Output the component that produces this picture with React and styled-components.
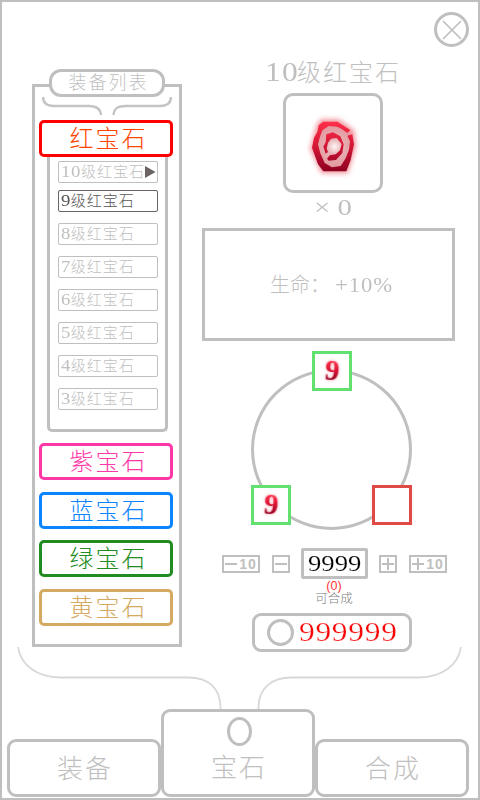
import React from "react";
import styled, { createGlobalStyle } from "styled-components";

const LINE = "#bfbfbf";
const RED = "#fa0505";

const Global = createGlobalStyle`
  * { box-sizing: border-box; }
  body { margin: 0; background: #fff; }
  button { padding: 0; margin: 0; background: #fff; font: inherit; color: inherit; }
  svg { display: block; flex: none; }
`;

const Frame = styled.div`
  width: 480px;
  height: 800px;
  border: 2px solid ${LINE};
  background: #fff;
  color: ${LINE};
  font-family: "Liberation Serif", "Noto Sans CJK SC", serif;
  font-weight: 300;
  display: flex;
  flex-direction: column;
  overflow: hidden;
`;

const Columns = styled.main`
  display: flex;
  height: 645px;
  padding-left: 30px;
  gap: 20px;
`;

const Label = styled.span`
  display: block;
  white-space: pre;
  font-size: ${(p) => p.$size}px;
  line-height: ${(p) => p.$line || p.$size}px;
  letter-spacing: ${(p) => p.$gap || 0}px;
  color: ${(p) => p.$color || "inherit"};
`;

const Digits = styled.span`
  display: inline-block;
  font-size: ${(p) => p.$size}px;
  letter-spacing: ${(p) => p.$gap || 0}px;
  transform: scaleX(${(p) => p.$stretch || 1.17});
  transform-origin: left;
  margin-right: ${(p) => p.$pad || 0}px;
  -webkit-text-stroke: ${(p) => p.$thin || 0}px #fff;
`;

const Sidebar = styled.aside`
  width: 150px;
  height: 563px;
  margin-top: 82px;
  border: 3px solid ${LINE};
  display: flex;
  flex-direction: column;
  align-items: center;
`;

const SidebarTitle = styled.h2`
  width: 116px;
  height: 28px;
  margin: -18px 0 0;
  flex: none;
  border: 3px solid ${LINE};
  border-radius: 12px;
  background: #fff;
  font-weight: 300;
  display: flex;
  justify-content: center;
  align-items: center;
  padding-left: 3px;
`;

const CategoryButton = styled.button`
  width: 134px;
  height: 37px;
  flex: none;
  border: 3px solid ${(p) => p.$color};
  border-radius: 5px;
  color: ${(p) => p.$text || p.$color};
  margin-left: -2px;
  display: flex;
  justify-content: center;
  align-items: center;
  padding: 1px 0 0 5px;
`;

const LevelList = styled.div`
  width: 121px;
  height: 275px;
  flex: none;
  border: 3px solid ${LINE};
  border-top: 0;
  border-radius: 0 0 5px 5px;
  padding: 4px 0 0 8px;
  display: flex;
  flex-direction: column;
  gap: 11px;
`;

const LevelButton = styled.button`
  width: 100px;
  height: 22px;
  flex: none;
  border: 1px solid ${(p) => (p.$active ? "#6b6262" : LINE)};
  border-radius: 2px;
  color: ${(p) => (p.$active ? "#555" : LINE)};
  padding-left: 2px;
  display: flex;
  align-items: center;
  &:first-child { margin-bottom: -4px; }
`;

const Categories = styled.div`
  margin-top: 11px;
  display: flex;
  flex-direction: column;
  gap: 11.7px;
`;

const Detail = styled.section`
  width: 274px;
  display: flex;
  flex-direction: column;
`;

const CloseButton = styled.button`
  width: 35px;
  height: 35px;
  margin: 10px 7px 0 232px;
  flex: none;
  border: 3px solid ${LINE};
  border-radius: 50%;
  display: grid;
  place-items: center;
`;

const GemHeader = styled.div`
  width: 262px;
  height: 181px;
  flex: none;
  display: flex;
  flex-direction: column;
  align-items: center;
  padding-top: 11px;
`;

const GemBox = styled.div`
  width: 100px;
  height: 100px;
  margin: 6px 0 5px;
  flex: none;
  border: 3px solid ${LINE};
  border-radius: 10px;
  display: flex;
  justify-content: center;
  padding-top: 20px;
`;

const StatBox = styled.div`
  width: 253px;
  height: 113px;
  flex: none;
  border: 3px solid ${LINE};
  display: flex;
  align-items: center;
  padding-left: 65px;
`;

const Ring = styled.div`
  position: relative;
  width: 161px;
  height: 161px;
  margin: 28px 0 0 49px;
  flex: none;
  border: 3px solid ${LINE};
  border-radius: 50%;
`;

const Slot = styled.div`
  position: absolute;
  left: ${(p) => p.$x}px;
  top: ${(p) => p.$y}px;
  width: 40px;
  height: 40px;
  border: 3px solid ${(p) => (p.$empty ? "#e14848" : "#62e070")};
  background: #fff;
  display: grid;
  place-items: center;
`;

const GemNine = styled.span`
  font: bold 29px/29px "Liberation Serif", serif;
  transform: translateY(-1px) rotate(5deg);
  color: transparent;
  background: linear-gradient(#ff3048 20%, #d81335 50%, #8e0020 85%);
  background-clip: text;
  filter: drop-shadow(0 0 1.5px rgba(235, 60, 80, 0.6));
`;

const Stepper = styled.div`
  display: flex;
  align-items: center;
  margin: 18px 0 0 20px;
  height: 31px;
  flex: none;
`;

const StepButton = styled.button`
  width: ${(p) => (p.$wide ? 38 : 18)}px;
  height: 18px;
  margin-right: ${(p) => p.$after || 0}px;
  border: 2px solid ${LINE};
  display: flex;
  align-items: center;
  justify-content: center;
  gap: 2px;
  font: bold 14px/14px "Liberation Sans", sans-serif;
  letter-spacing: 0.9px;
`;

const Amount = styled.div`
  width: 67px;
  height: 31px;
  margin-right: 11px;
  border: 3px solid ${LINE};
  border-radius: 2px;
  color: #000;
  display: flex;
  align-items: center;
  padding-left: 4px;
`;

const Possible = styled.div`
  width: 264px;
  height: 34px;
  padding-top: 1px;
  display: flex;
  flex-direction: column;
  align-items: center;
  gap: 1px;
  flex: none;
`;

const Count = styled.span`
  font: 12.5px/12px "Liberation Sans", sans-serif;
  color: #f33;
`;

const Cost = styled.button`
  width: 160px;
  height: 39px;
  margin-left: 50px;
  border: 3px solid ${LINE};
  border-radius: 9px;
  display: flex;
  align-items: center;
  padding-left: 12px;
  gap: 5px;
  flex: none;
`;

const Coin = styled.span`
  width: ${(p) => p.$w}px;
  height: ${(p) => p.$h}px;
  border: 3px solid ${LINE};
  border-radius: 50%;
  flex: none;
`;

const Flourish = styled.div`
  height: 62px;
  margin-left: 14px;
  flex: none;
`;

const Tabs = styled.nav`
  display: flex;
  align-items: flex-end;
  height: 88px;
  padding-left: 5px;
  flex: none;
`;

const Tab = styled.button`
  width: 154px;
  height: ${(p) => (p.$active ? 88 : 58)}px;
  border: 3px solid ${LINE};
  border-radius: 9px;
  display: flex;
  flex-direction: column;
  align-items: center;
  justify-content: flex-end;
  padding-bottom: ${(p) => (p.$active ? 12 : 11)}px;
  padding-left: 2px;
  gap: 10px;
`;

const BraceArt = () => (
  <svg width="130" height="23" viewBox="42 97 130 23" fill="none" stroke="#c4c4c4" strokeWidth="2.4">
    <path d="M43 97C43 103 47 106 54 106H89C96 106 100.500 108 101 115" />
    <path d="M171 97C171 103 167 106 160 106H126C118 106 114 108 113.500 115" />
  </svg>
);

const GemZero = () => (
  <svg width="50" height="60" viewBox="0 0 150 180" overflow="visible">
    <defs>
      <linearGradient id="ruby" x1="0" y1="15" x2="0" y2="168" gradientUnits="userSpaceOnUse">
        <stop offset="0" stopColor="#ff304a" />
        <stop offset=".5" stopColor="#d31635" />
        <stop offset="1" stopColor="#8c0020" />
      </linearGradient>
      <radialGradient id="core" cx="80" cy="92" r="60" gradientUnits="userSpaceOnUse">
        <stop offset="0" stopColor="#fff6f6" />
        <stop offset=".4" stopColor="#e8b0b3" />
        <stop offset="1" stopColor="#e39a9f" />
      </radialGradient>
      <filter id="halo" x="-30%" y="-30%" width="160%" height="160%">
        <feGaussianBlur stdDeviation="8" />
      </filter>
    </defs>
    <path d="M38 10H92L138 42L144 90L120 172H40L6 98L26 28Z" fill="#f2929b" filter="url(#halo)" />
    <path d="M42 22H90L126 55L130 95L108 158H48L22 95Z" fill="url(#core)" />
    <path
      d="M45 17L88 17L127 42L118 51L100 38L88 32L62 30L43 43L36 62L30 85L37 112L50 141L72 154L98 150L113 127L123 101L126 76L118 59L133 55L138 85L128 132L115 166H46L30 145L12 95L18 65L28 48L32 28Z"
      fill="url(#ruby)"
    />
    <path
      d="M55 55L75 49L97 61L107 85L103 111L84 132L62 134L57 128L65 118L83 115L96 103L101 84L86 66L69 68L60 80L56 98L60 108L53 113L46 92L53 78Z"
      fill="url(#ruby)"
    />
  </svg>
);

const levels = ["10", "9", "8", "7", "6", "5", "4", "3"];
const categories = [
  ["紫宝石", "#ff38a8"],
  ["蓝宝石", "#0a84ff"],
  ["绿宝石", "#228b22"],
  ["黄宝石", "#d4aa62"],
];

export default function App() {
  return (
    <Frame>
      <Global />
      <Columns>
        <Sidebar>
          <SidebarTitle>
            <Label $size={18} $gap={2}>装备列表</Label>
          </SidebarTitle>
          <BraceArt />
          <CategoryButton $color="#ff0000" $text="#ff4500">
            <Label $size={24} $gap={2}>红宝石</Label>
          </CategoryButton>
          <LevelList>
            {levels.map((level) => (
              <LevelButton key={level} $active={level === "9"}>
                <Label $size={15} $line={18} $gap={1}>
                  <Digits $size={16} $gap={0.5} $pad={level.length * 1.7}>{level}</Digits>级红宝石
                </Label>
                {level === "10" && (
                  <svg width="11" height="12" viewBox="0 0 11 12">
                    <path d="M0 0L10.500 6L0 12Z" fill="#6b6262" />
                  </svg>
                )}
              </LevelButton>
            ))}
          </LevelList>
          <Categories>
            {categories.map(([name, color]) => (
              <CategoryButton key={name} $color={color}>
                <Label $size={24} $gap={2}>{name}</Label>
              </CategoryButton>
            ))}
          </Categories>
        </Sidebar>

        <Detail>
          <CloseButton aria-label="close">
            <svg width="20" height="20" viewBox="0 0 20 20" stroke={LINE} strokeWidth="1.7">
              <path d="M1 1L19 19M19 1L1 19" />
            </svg>
          </CloseButton>
          <GemHeader>
            <Label $size={24} $line={28} $gap={2}>
              <Digits $size={27} $gap={1} $pad={3}>10</Digits>级红宝石
            </Label>
            <GemBox><GemZero /></GemBox>
            <Label $size={24} $line={18}>
              <Digits $size={24} $stretch={1.2} $pad={6}>× 0</Digits>
            </Label>
          </GemHeader>
          <StatBox>
            <Label $size={20} $line={24}>
              生命：{" "}
              <Digits $size={22} $stretch={1.03} $gap={0.9} $pad={6}>+10%</Digits>
            </Label>
          </StatBox>
          <Ring>
            <Slot $x={58} $y={-21}><GemNine>9</GemNine></Slot>
            <Slot $x={-3} $y={113}><GemNine>9</GemNine></Slot>
            <Slot $x={118} $y={113} $empty />
          </Ring>
          <Stepper>
            <StepButton $wide $after={12}>
              <svg width="12" height="12" stroke={LINE} strokeWidth="2"><path d="M0 6H12" /></svg>10
            </StepButton>
            <StepButton $after={11}>
              <svg width="12" height="12" stroke={LINE} strokeWidth="2"><path d="M0 6H12" /></svg>
            </StepButton>
            <Amount>
              <Label $size={23}><Digits $size={23} $stretch={1.16} $thin={0.15}>9999</Digits></Label>
            </Amount>
            <StepButton $after={12}>
              <svg width="12" height="12" stroke={LINE} strokeWidth="2"><path d="M0 6H12M6 0V12" /></svg>
            </StepButton>
            <StepButton $wide>
              <svg width="12" height="12" stroke={LINE} strokeWidth="2"><path d="M0 6H12M6 0V12" /></svg>10
            </StepButton>
          </Stepper>
          <Possible>
            <Count>(0)</Count>
            <Label $size={12.5} $line={13} $color="#808080">可合成</Label>
          </Possible>
          <Cost>
            <Coin $w={27} $h={27} />
            <Label $size={27} $color={RED}>
              <Digits $size={27} $gap={0.6} $stretch={1.165} $thin={0.25}>999999</Digits>
            </Label>
          </Cost>
        </Detail>
      </Columns>
      <Flourish>
        <svg width="448" height="62" viewBox="16 647 448 62" fill="none" stroke="#d8d8d8" strokeWidth="1.8">
          <path d="M18 646C20 665 37 677 60 677.500H187C208 677 221 688 220.500 709" />
          <path d="M461 646C459 665 442 677 419 677.500H293C272 677 258 688 258.500 709" />
        </svg>
      </Flourish>
      <Tabs>
        <Tab><Label $size={26} $gap={2}>装备</Label></Tab>
        <Tab $active>
          <Coin $w={25} $h={29} />
          <Label $size={26} $gap={2}>宝石</Label>
        </Tab>
        <Tab><Label $size={26} $gap={2}>合成</Label></Tab>
      </Tabs>
    </Frame>
  );
}
